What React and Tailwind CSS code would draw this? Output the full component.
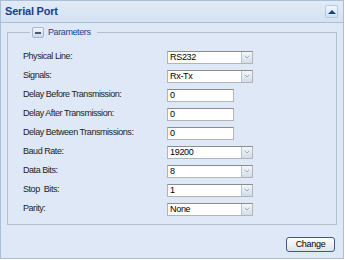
import { ChevronDown } from 'lucide-react';

const ROWS = [
  { label: 'Physical Line:', value: 'RS232', kind: 'select' },
  { label: 'Signals:', value: 'Rx-Tx', kind: 'select' },
  { label: 'Delay Before Transmission:', value: '0', kind: 'input' },
  { label: 'Delay After Transmission:', value: '0', kind: 'input' },
  { label: 'Delay Between Transmissions:', value: '0', kind: 'input' },
  { label: 'Baud Rate:', value: '19200', kind: 'select' },
  { label: 'Data Bits:', value: '8', kind: 'select' },
  { label: 'Stop  Bits:', value: '1', kind: 'select' },
  { label: 'Parity:', value: 'None', kind: 'select' },
];

function Field({ row }) {
  if (row.kind === 'input') {
    return (
      <div className="w-[67px] h-[13px] bg-white border border-[#b4b4b4] border-t-[#8c8c8c] flex items-center pl-[2px] text-[9px] text-black leading-none">
        {row.value}
      </div>
    );
  }
  return (
    <div className="w-[86px] h-[13px] bg-white border border-[#b4b4b4] border-t-[#8c8c8c] flex items-stretch text-[9px] text-black leading-none tracking-[-0.3px]">
      <div className="flex-1 flex items-center pl-[2px]">{row.value}</div>
      <div className="w-[11px] border-l border-[#b8c4d4] bg-gradient-to-b from-[#f4f7fb] to-[#d2dcea] flex items-center justify-center">
        <ChevronDown className="w-[8px] h-[8px] text-[#5b7398]" strokeWidth={1.6} />
      </div>
    </div>
  );
}

export default function App() {
  return (
    <div
      className="w-[345px] h-[260px] bg-white"
      style={{ fontFamily: '"Liberation Sans", Arial, sans-serif' }}
    >
      <div className="w-[344px] h-[259px] border border-[#a9bfd6] bg-[#dfe8f6] flex flex-col">
        <div className="h-[22px] border-b border-[#a9bfd6] bg-gradient-to-b from-[#e2ebf7] to-[#d5e2f2] flex items-center justify-between pl-[4px] pr-[5px]">
          <span className="text-[11px] font-bold text-[#15428b] tracking-[-0.2px]">Serial Port</span>
          <div className="w-[13px] h-[13px] rounded-[2px] border border-[#b7c9df] bg-gradient-to-b from-[#f2f6fb] to-[#d2def0] flex items-center justify-center">
            <div className="w-0 h-0 border-l-[4px] border-r-[4px] border-b-[4px] border-l-transparent border-r-transparent border-b-[#15428b]" />
          </div>
        </div>

        <div className="flex-1 flex flex-col px-[6px] pt-[3px]">
          <fieldset className="border border-[#b5bfcb] pl-[15px] pr-[8px] pb-[8px] pt-[11px] mx-0">
            <legend className="flex items-center gap-[4px] px-[2px] ml-[7px]">
              <span className="w-[12px] h-[11px] rounded-[2px] border border-[#a5b5ca] bg-gradient-to-b from-[#f3f6fa] to-[#cfd9e7] flex items-center justify-center">
                <span className="w-[6px] h-[2px] bg-[#3d5a80]" />
              </span>
              <span className="text-[9px] text-[#15428b] pr-[4px] tracking-[-0.4px]">Parameters</span>
            </legend>
            <div className="flex flex-col gap-[6px]">
              {ROWS.map((row) => (
                <div key={row.label} className="flex items-center h-[13px]">
                  <span className="w-[144px] text-[9px] text-[#222] whitespace-pre tracking-[-0.45px]">{row.label}</span>
                  <Field row={row} />
                </div>
              ))}
            </div>
          </fieldset>

          <div className="flex justify-end pr-[2px] pt-[12px]">
            <button className="w-[49px] h-[15px] rounded-[3px] border border-[#3d5a80] bg-gradient-to-b from-[#ffffff] to-[#dde2ea] text-[9px] text-black leading-none tracking-[-0.3px]">
              Change
            </button>
          </div>
        </div>
      </div>
    </div>
  );
}
